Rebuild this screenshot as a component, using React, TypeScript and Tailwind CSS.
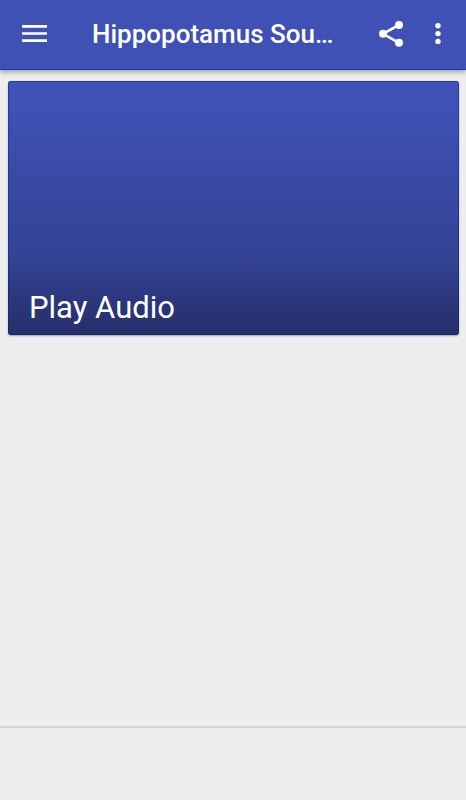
export default function App() {
  return (
    <div className="flex min-h-screen flex-col bg-[#eeeeee] font-['Roboto','Noto_Sans',sans-serif]">
      <header className="z-10 flex h-[70px] items-center border-b border-[#1a3ab0] bg-[#3f51b5] pr-3 pb-0.5 pl-[14px] text-white shadow-[0_2px_5px_rgba(0,0,0,0.35)]">
        <button type="button" aria-label="Open menu" className="flex size-10 shrink-0 items-center justify-center">
          <svg viewBox="0 0 25 18" className="h-[18px] w-[25px]" fill="currentColor" aria-hidden="true">
            <path d="M0 0h25v2.7H0zM0 7.2h25v2.6H0zM0 14.2h25v2.7H0z" />
          </svg>
        </button>
        <h1 className="ml-[38px] min-w-0 flex-1 truncate text-[26px] leading-8 font-medium">Hippopotamus Sou…</h1>
        <button type="button" aria-label="Share" className="ml-4 flex size-10 shrink-0 items-center justify-center">
          <svg viewBox="0 0 24 26" className="h-[26px] w-6" fill="currentColor" aria-hidden="true">
            <path d="M20 3.8 4 12.8l16 9" fill="none" stroke="currentColor" strokeWidth="2.6" />
            <circle cx="20" cy="4" r="4" />
            <circle cx="4" cy="12.8" r="4" />
            <circle cx="20" cy="21.8" r="4" />
          </svg>
        </button>
        <button type="button" aria-label="More options" className="ml-[11px] flex h-10 w-8 shrink-0 items-center justify-center">
          <svg viewBox="0 0 6 22" className="h-[22px] w-[6px]" fill="currentColor" aria-hidden="true">
            <circle cx="3" cy="2.8" r="2.7" />
            <circle cx="3" cy="10.6" r="2.7" />
            <circle cx="3" cy="18.4" r="2.7" />
          </svg>
        </button>
      </header>
      <main className="flex-1 pt-[11px] pr-[7px] pl-2">
        <button type="button" className="flex h-[254px] w-full items-end rounded-[3px] bg-linear-to-b from-[#3f51b5] from-10% via-[#334395] via-68% to-[#262f6a] px-[21px] pb-[7px] text-left text-[31px] leading-10 text-white shadow-[inset_0_0_0_1px_rgba(0,20,140,0.4),0_1px_2px_rgba(0,0,0,0.3)]">
          Play Audio
        </button>
      </main>
      <footer className="h-[74px] border-t-2 border-[#d4d4d4]" />
    </div>
  );
}
